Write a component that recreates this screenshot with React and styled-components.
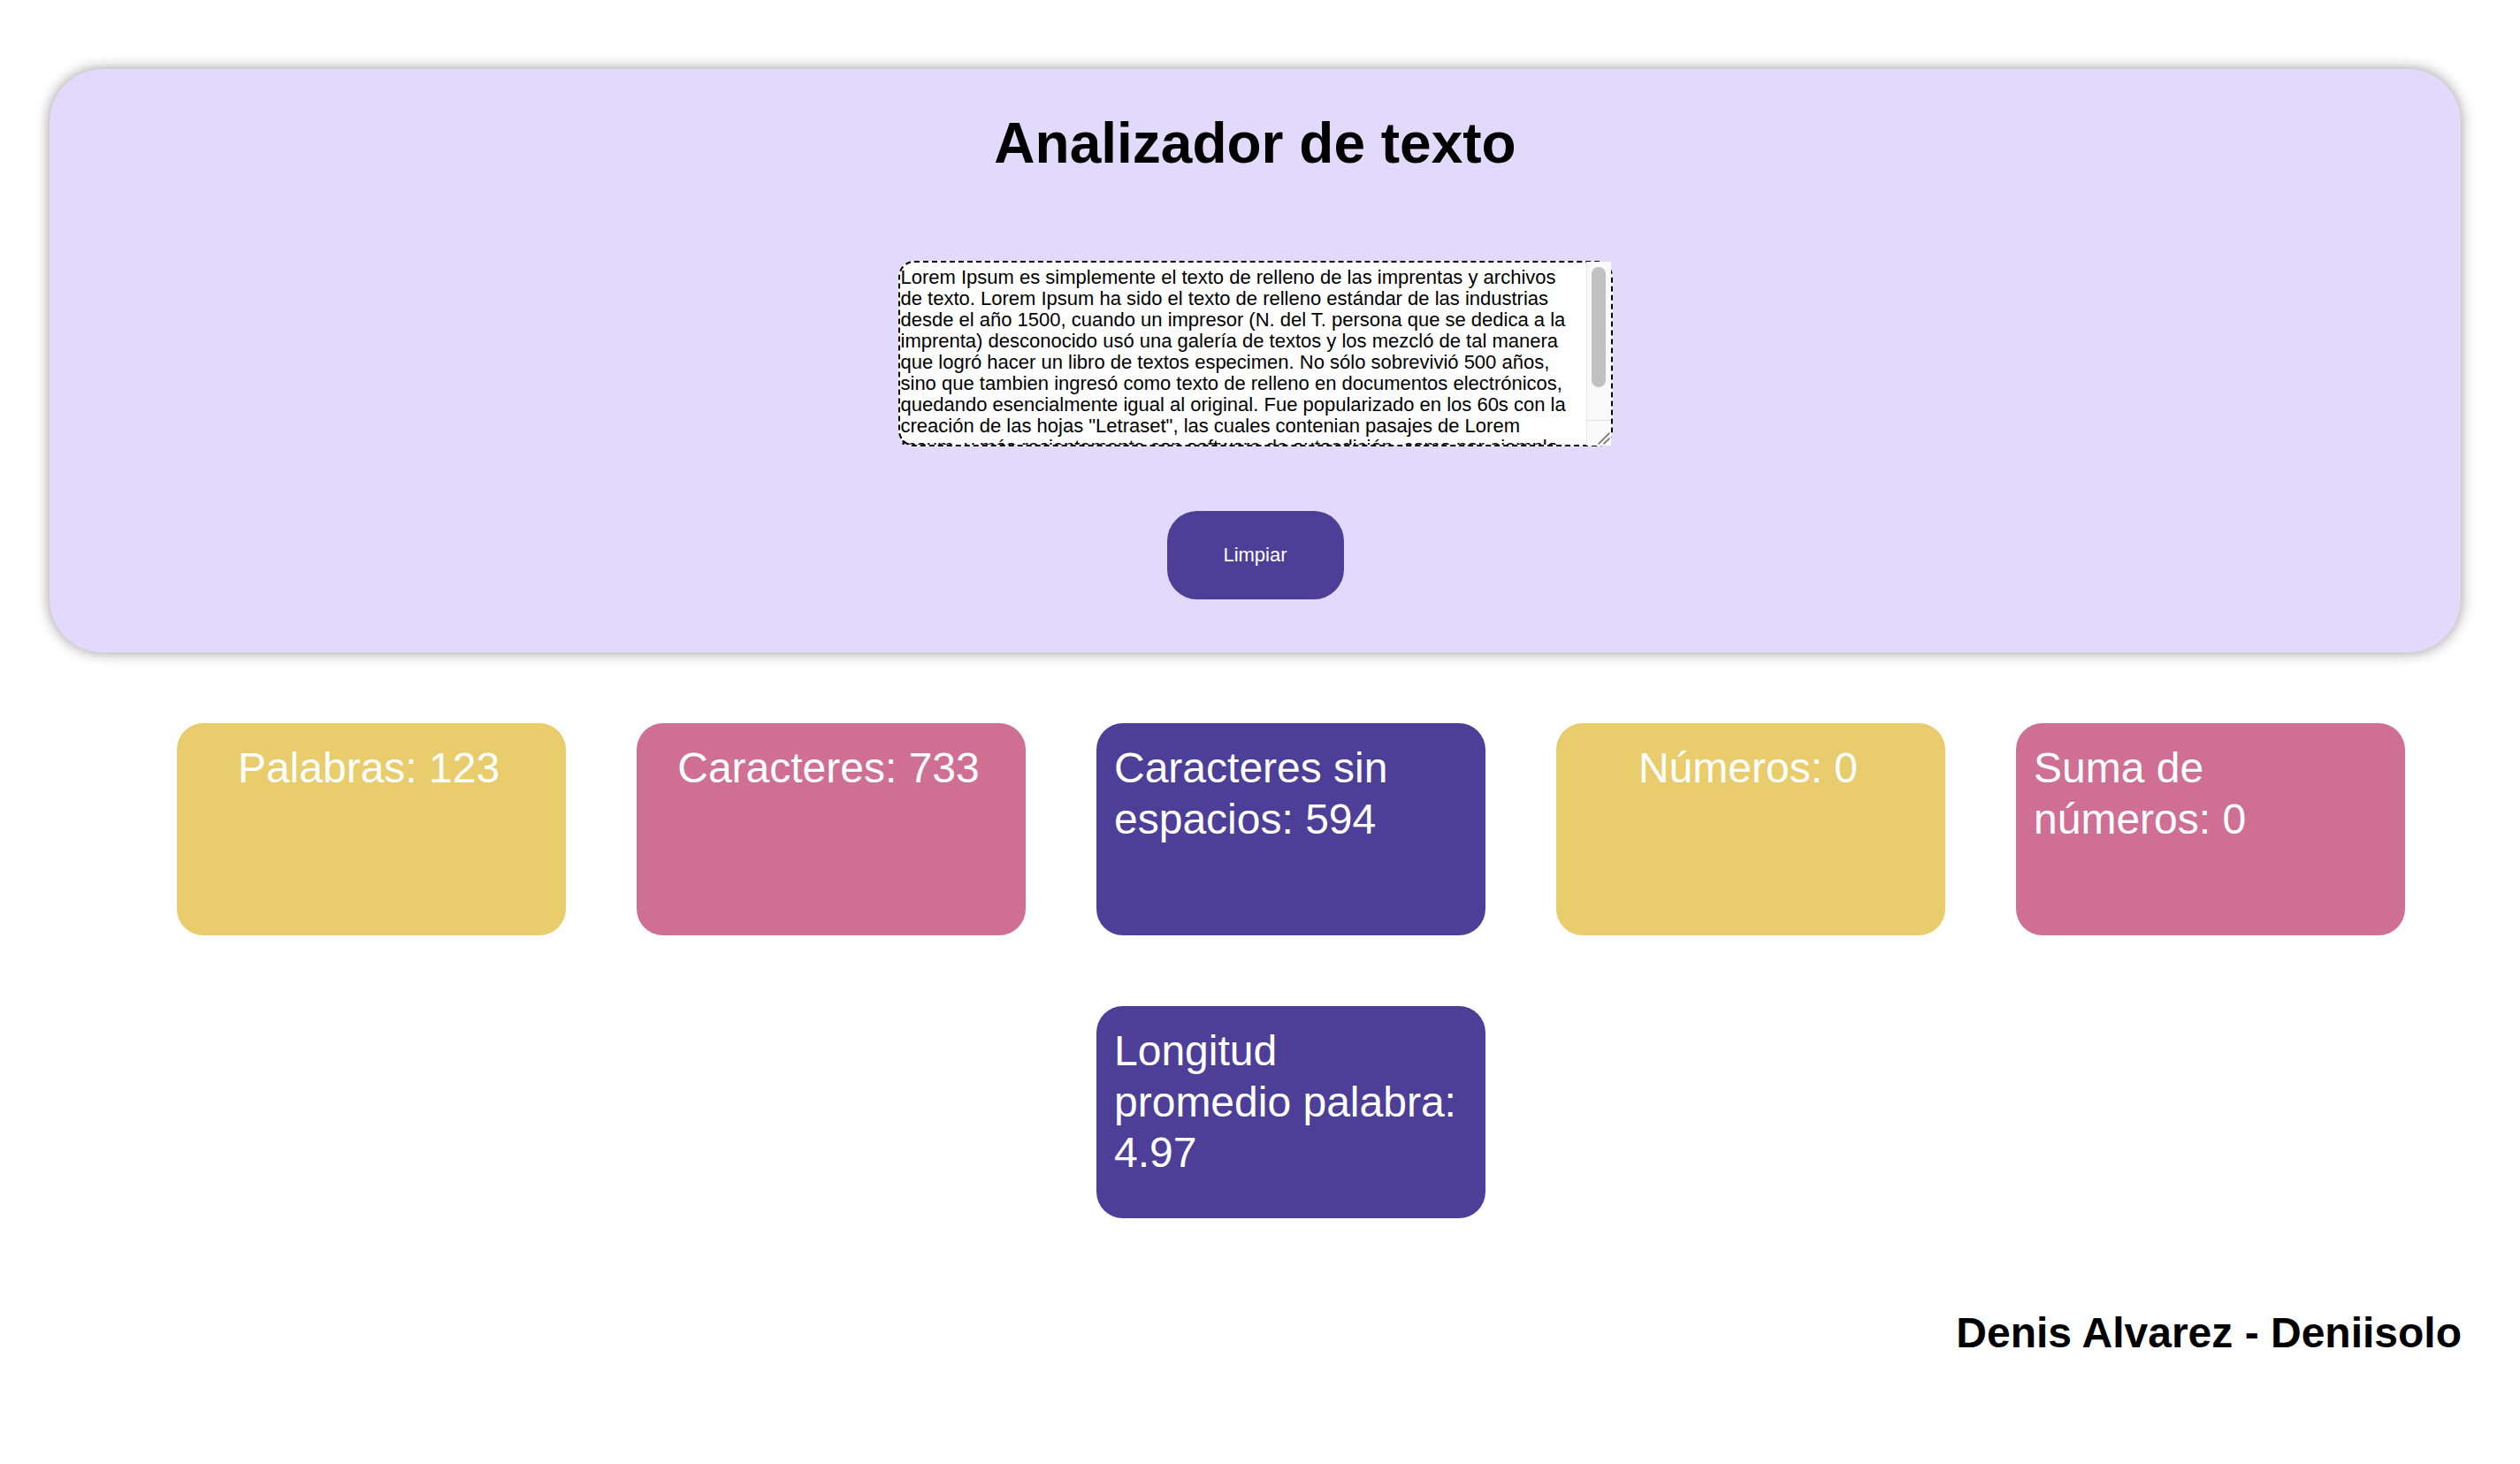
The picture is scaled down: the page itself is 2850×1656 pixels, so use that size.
import React from "react";
import styled, { createGlobalStyle } from "styled-components";

const GlobalStyle = createGlobalStyle`
  html, body {
    margin: 0;
    padding: 0;
    background: #ffffff;
  }
  body {
    font-family: "Liberation Sans", Arial, Helvetica, sans-serif;
    color: #000000;
  }
`;

const Page = styled.main`
  padding-top: 78px;
  padding-bottom: 40px;
`;

const Panel = styled.section`
  margin: 0 67px 0 56px;
  padding: 47px 0 60px;
  background: #e1dafb;
  border-radius: 60px;
  box-shadow: 0 0 16px rgba(0, 0, 0, 0.42);
  display: flex;
  flex-direction: column;
  align-items: center;
`;

const Title = styled.h1`
  margin: 0;
  font-size: 64px;
  font-weight: 700;
  line-height: normal;
`;

const Field = styled.div`
  box-sizing: border-box;
  width: 808px;
  height: 210px;
  margin-top: 96px;
  border: 2px dashed #000000;
  border-radius: 18px;
  background: #ffffff;
  display: flex;
`;

const TextInput = styled.textarea`
  flex: 1;
  min-width: 0;
  box-sizing: border-box;
  height: 100%;
  margin: 0;
  padding: 5px 12px 0 1px;
  border: none;
  background: transparent;
  color: #000000;
  font-family: "Liberation Sans", Arial, Helvetica, sans-serif;
  font-size: 22px;
  line-height: 24px;
  resize: none;
  outline: none;
  overflow-y: auto;
  scrollbar-width: none;
`;

const ScrollColumn = styled.div`
  width: 28px;
  margin-top: -1px;
  margin-bottom: -1px;
  display: flex;
  flex-direction: column;
`;

const ScrollTrack = styled.div`
  flex: 1;
  box-sizing: border-box;
  padding: 6px 6px 0 5px;
  background: #fafafa;
  border-left: 1px solid #e8e8e8;
`;

const ScrollThumb = styled.div`
  width: 16px;
  height: 136px;
  border-radius: 8px;
  background: #c1c1c1;
`;

const ResizeCorner = styled.div`
  box-sizing: border-box;
  height: 29px;
  background: #fafafa;
  border-top: 1px solid #e3e3e3;
  border-left: 1px solid #e8e8e8;
  display: flex;
  align-items: flex-end;
  justify-content: flex-end;
`;

const ClearButton = styled.button`
  margin-top: 73px;
  width: 200px;
  height: 100px;
  border: none;
  border-radius: 34px;
  background: #4d3e98;
  color: #ffffff;
  font-family: "Liberation Sans", Arial, Helvetica, sans-serif;
  font-size: 22px;
  cursor: pointer;
`;

const StatsGrid = styled.div`
  width: 2520px;
  margin: 80px 0 0 200px;
  display: flex;
  flex-wrap: wrap;
  justify-content: center;
  gap: 80px;
`;

const tones = {
  yellow: "#e9cc6b",
  pink: "#cf6f94",
  purple: "#4d3e98",
};

const StatCard = styled.div`
  box-sizing: border-box;
  width: 440px;
  height: 240px;
  padding: 22px 26px 20px 20px;
  border-radius: 30px;
  background: ${(p) => tones[p.$tone]};
  color: #ffffff;
  display: flex;
  justify-content: center;
  align-items: flex-start;
  font-size: 48px;
  line-height: 1.2;
`;

const StatText = styled.span`
  display: block;
`;

const Footer = styled.h2`
  margin: 102px 0 0;
  padding-right: 66px;
  text-align: right;
  font-size: 48px;
  font-weight: 700;
  line-height: normal;
`;

const SAMPLE =
  'Lorem Ipsum es simplemente el texto de relleno de las imprentas y archivos de texto. Lorem Ipsum ha sido el texto de relleno estándar de las industrias desde el año 1500, cuando un impresor (N. del T. persona que se dedica a la imprenta) desconocido usó una galería de textos y los mezcló de tal manera que logró hacer un libro de textos especimen. No sólo sobrevivió 500 años, sino que tambien ingresó como texto de relleno en documentos electrónicos, quedando esencialmente igual al original. Fue popularizado en los 60s con la creación de las hojas "Letraset", las cuales contenian pasajes de Lorem Ipsum, y más recientemente con software de autoedición, como por ejemplo Aldus PageMaker, el cual incluye versiones del Lorem Ipsum.';

const stats = [
  { label: "Palabras", value: "123", tone: "yellow" },
  { label: "Caracteres", value: "733", tone: "pink" },
  { label: "Caracteres sin espacios", value: "594", tone: "purple" },
  { label: "Números", value: "0", tone: "yellow" },
  { label: "Suma de números", value: "0", tone: "pink" },
  { label: "Longitud promedio palabra", value: "4.97", tone: "purple" },
];

function Grip() {
  return (
    <svg width="22" height="22" viewBox="0 0 22 22" aria-hidden="true">
      <path d="M20 8 L8 20" stroke="#6b6b6b" strokeWidth="1.6" strokeLinecap="round" />
      <path d="M20 14 L14 20" stroke="#6b6b6b" strokeWidth="1.6" strokeLinecap="round" />
    </svg>
  );
}

export default function App() {
  return (
    <>
      <GlobalStyle />
      <Page>
        <Panel>
          <Title>Analizador de texto</Title>
          <Field>
            <TextInput defaultValue={SAMPLE} />
            <ScrollColumn>
              <ScrollTrack>
                <ScrollThumb />
              </ScrollTrack>
              <ResizeCorner>
                <Grip />
              </ResizeCorner>
            </ScrollColumn>
          </Field>
          <ClearButton type="button">Limpiar</ClearButton>
        </Panel>
        <StatsGrid>
          {stats.map((s) => (
            <StatCard key={s.label} $tone={s.tone}>
              <StatText>
                {s.label}: {s.value}
              </StatText>
            </StatCard>
          ))}
        </StatsGrid>
        <Footer>Denis Alvarez - Deniisolo</Footer>
      </Page>
    </>
  );
}
